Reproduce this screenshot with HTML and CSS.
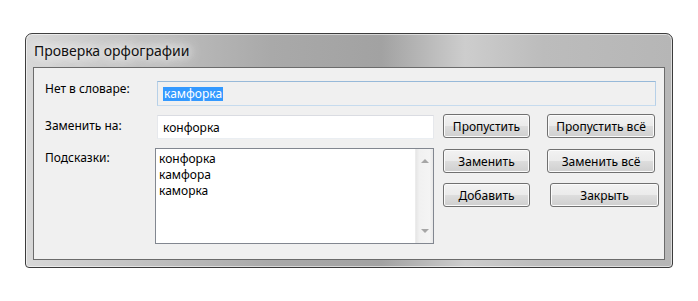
FILE: index.html
```html
<!DOCTYPE html>
<html lang="ru">

<head>
    <meta charset="UTF-8">
    <meta name="viewport" content="width=device-width, initial-scale=1.0">
    <title>Проверка орфографии</title>
    <link rel="stylesheet" href="styles.css">
</head>

<body>
    <div class="window">
        <div class="titlebar">
            <span class="title">Проверка орфографии</span>
        </div>
        <div class="panel">
            <div class="row row-word">
                <span class="label">Нет в словаре:</span>
                <div class="field field-readonly"><span class="selected">камфорка</span></div>
            </div>
            <div class="row row-replace">
                <span class="label">Заменить на:</span>
                <div class="field field-input">конфорка</div>
                <button class="btn btn-narrow">Пропустить</button>
                <button class="btn btn-wide">Пропустить всё</button>
            </div>
            <div class="row row-hints">
                <span class="label">Подсказки:</span>
                <div class="listbox">
                    <ul class="items">
                        <li>конфорка</li>
                        <li>камфора</li>
                        <li>каморка</li>
                    </ul>
                    <div class="scrollbar">
                        <span class="arrow up"></span>
                        <span class="arrow down"></span>
                    </div>
                </div>
                <div class="actions">
                    <div class="actions-row">
                        <button class="btn btn-narrow">Заменить</button>
                        <button class="btn btn-wide">Заменить всё</button>
                    </div>
                    <div class="actions-row">
                        <button class="btn btn-narrow">Добавить</button>
                        <button class="btn btn-close">Закрыть</button>
                    </div>
                </div>
            </div>
        </div>
    </div>
</body>

</html>
```

FILE: styles.css
```css
body {
    margin: 0;
    padding: 33px 0 0 25px;
    background: #fff;
    font-family: "Noto Sans", "Open Sans", sans-serif;
    font-size: 12px;
    color: #000;
}

/* window frame */
.window {
    box-sizing: border-box;
    width: 648px;
    height: 235px;
    display: flex;
    flex-direction: column;
    padding: 0 7px 7px 7px;
    border: 1px solid #3c3c3c;
    border-radius: 7px 7px 4px 4px;
    background: linear-gradient(to right, #d8d8d8 0%, #c6c6c6 14%, #a9a9a9 38%, #a2a2a2 55%, #cdcdcd 68%, #bcbcbc 80%, #b6b6b6 100%);
    box-shadow: inset 0 0 0 1px rgba(255, 255, 255, 0.55);
}

.titlebar {
    height: 33px;
    display: flex;
    align-items: center;
    padding-left: 1px;
}

.title {
    font-family: "Noto Sans", sans-serif;
    font-size: 14px;
    color: #111;
    text-shadow: 0 0 10px #fff, 0 0 14px #fff, 0 0 20px #fff;
}

.panel {
    flex: 1;
    display: flex;
    flex-direction: column;
    padding: 13px 8px 0 11px;
    border: 1px solid #6b6b6b;
    background: #f0f0f0;
}

.row {
    display: flex;
    align-items: flex-start;
}

.row > * {
    flex-shrink: 0;
}

.label {
    width: 112px;
    line-height: 15px;
}

/* text fields */
.field {
    box-sizing: border-box;
    height: 25px;
    display: flex;
    align-items: center;
    padding-left: 5px;
    line-height: 15px;
}

.field-readonly {
    flex: 1;
    background: #f0f0f0;
    border: 1px solid;
    border-color: #97b9d9 #b6d0e8 #c6dbee #b6d0e8;
}

.selected {
    background: #3399ff;
    color: #fff;
    padding: 0 1px;
    line-height: 14px;
}

.row-replace {
    margin-top: 8px;
}

.row-replace .label {
    padding-top: 4px;
}

.field-input {
    width: 277px;
    height: 24px;
    margin-top: 1px;
    background: #fff;
    border: 1px solid;
    border-color: #dadce2 #e6e8ec #eaeef2 #e6e8ec;
}

/* buttons */
.btn {
    box-sizing: border-box;
    height: 24px;
    padding: 0;
    font-family: inherit;
    font-size: 12px;
    color: #000;
    border: 1px solid #707070;
    border-radius: 3px;
    background: linear-gradient(#f2f2f2 0%, #ebebeb 48%, #dddddd 52%, #cfcfcf 100%);
    box-shadow: inset 0 0 0 1px #fbfbfb;
}

.btn-narrow {
    width: 87px;
}

.btn-wide {
    width: 108px;
}

.row-replace .btn-narrow {
    margin-left: 9px;
}

.row-replace .btn-wide,
.actions-row .btn-wide {
    margin-left: 17px;
}

.btn-close {
    width: 109px;
    margin-left: 20px;
}

/* suggestions list */
.row-hints {
    margin-top: 9px;
}

.row-hints .label {
    padding-top: 2px;
}

.listbox {
    box-sizing: border-box;
    width: 279px;
    height: 96px;
    margin-left: -2px;
    display: flex;
    background: #fff;
    border: 1px solid #828790;
}

.items {
    flex: 1;
    list-style: none;
    margin: 0;
    padding: 2px 0 0 3px;
}

.items li {
    line-height: 16px;
}

.scrollbar {
    width: 17px;
    display: flex;
    flex-direction: column;
    justify-content: space-between;
    align-items: center;
    padding: 10px 0 10px;
    background: linear-gradient(to right, #e6e6e6 0%, #f1f1f1 20%, #f4f4f4 80%, #e8e8e8 100%);
    border-left: 1px solid #ececec;
}

.arrow {
    width: 0;
    height: 0;
    border-left: 4px solid transparent;
    border-right: 4px solid transparent;
}

.arrow.up {
    border-bottom: 4px solid #a6a6a6;
}

.arrow.down {
    border-top: 4px solid #a6a6a6;
}

.actions {
    display: flex;
    flex-direction: column;
    gap: 10px;
    margin-top: 1px;
    margin-left: 9px;
}

.actions-row {
    display: flex;
}
```
